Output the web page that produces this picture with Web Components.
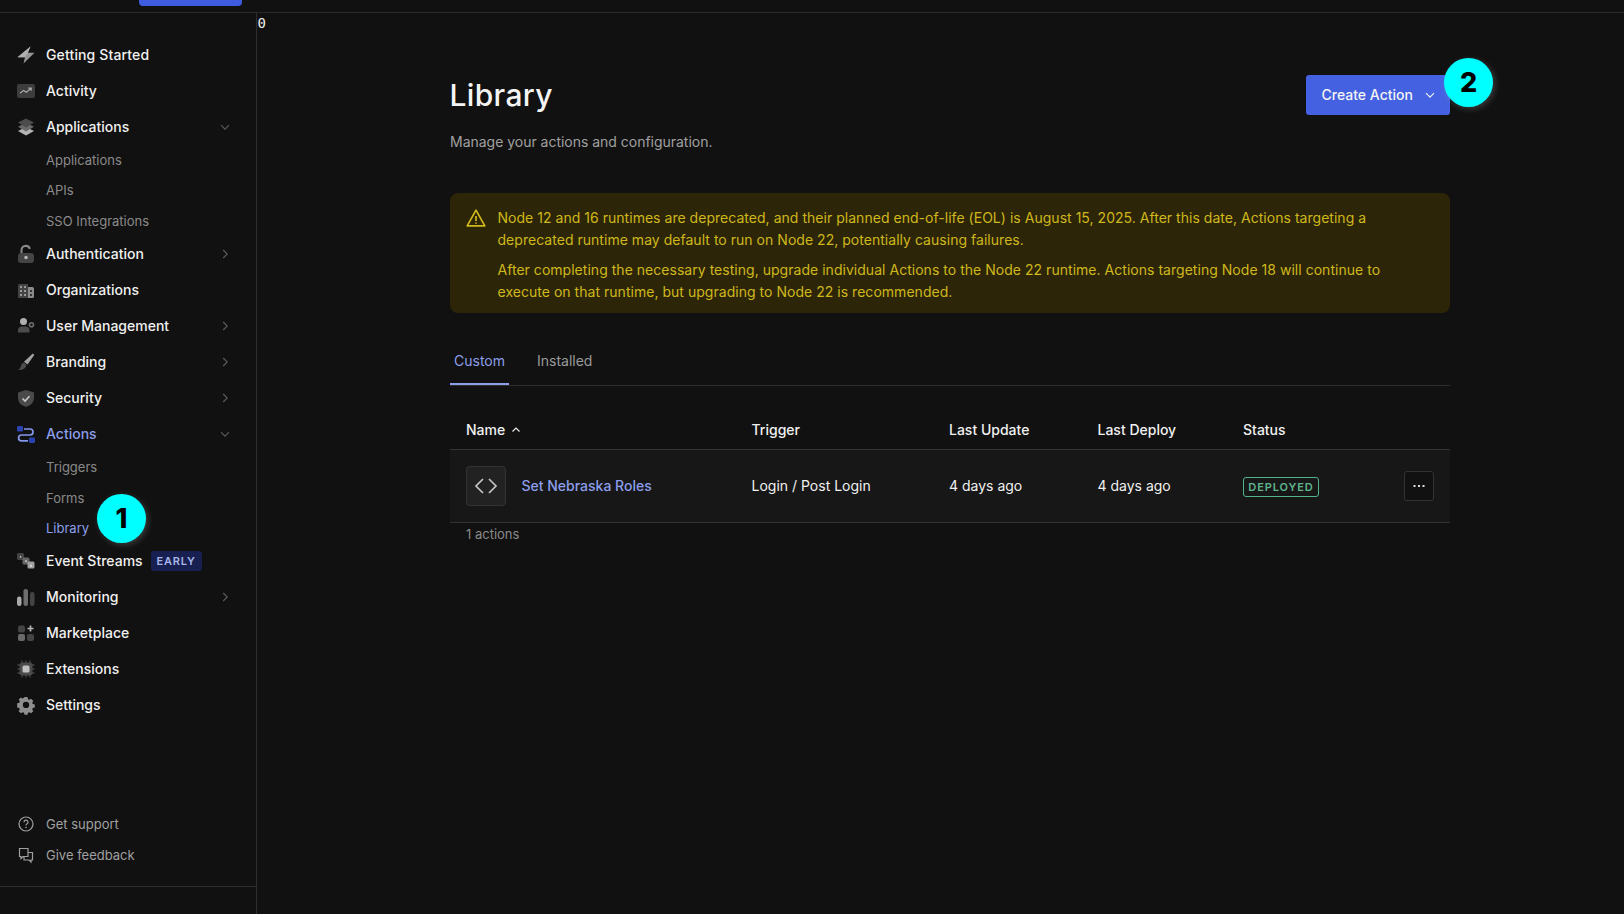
<!DOCTYPE html>
<html lang="en"><head><meta charset="utf-8"><title>Library</title>
<style>
html,body{margin:0;height:914px;overflow:hidden;background:#111;color:#f0f0f0;font-family:Inter,"Liberation Sans",sans-serif;}
app-shell{display:flex;flex-direction:column;height:914px;position:relative}
</style></head><body>
<app-shell>
  <top-bar></top-bar>
  <div style="display:flex;flex:1;min-height:0">
    <side-nav>
      <nav-item icon="bolt" style="letter-spacing:.14px">Getting Started</nav-item>
      <nav-item icon="activity">Activity</nav-item>
      <nav-item icon="stack" chevron="down">Applications</nav-item>
      <nav-sub>Applications</nav-sub>
      <nav-sub>APIs</nav-sub>
      <nav-sub>SSO Integrations</nav-sub>
      <nav-item icon="lock" chevron="right">Authentication</nav-item>
      <nav-item icon="org">Organizations</nav-item>
      <nav-item icon="user" chevron="right">User Management</nav-item>
      <nav-item icon="brush" chevron="right">Branding</nav-item>
      <nav-item icon="shield" chevron="right">Security</nav-item>
      <nav-item icon="actions" chevron="down" active>Actions</nav-item>
      <nav-sub style="height:31px">Triggers</nav-sub>
      <nav-sub style="height:31px">Forms</nav-sub>
      <nav-sub style="height:28.750px" active>Library</nav-sub>
      <nav-item icon="streams" badge="EARLY">Event Streams</nav-item>
      <nav-item icon="bars" chevron="right">Monitoring</nav-item>
      <nav-item icon="market">Marketplace</nav-item>
      <nav-item icon="chip">Extensions</nav-item>
      <nav-item icon="gear">Settings</nav-item>
      <nav-foot slot="foot" icon="help">Get support</nav-foot>
      <nav-foot slot="foot" icon="chat">Give feedback</nav-foot>
    </side-nav>
    <library-page></library-page>
  </div>
  <step-badge style="left:97px;top:494px">1</step-badge>
  <step-badge style="left:1444px;top:58px">2</step-badge>
</app-shell>
<script>
const ICONS={
bolt:'<path d="M14.500 1.500 1.500 12.200H9L7.500 18.500 18.500 7.800H11.800z" fill="#969696"/><path d="M14.500 1.500 1.500 12.200H9L11.800 7.800z" fill="#b0b0b0"/>',
activity:'<rect x="1" y="3" width="18" height="14" rx="2" fill="#3d3d3d"/><path d="M4 12.2 7.600 9.400l2.600 1.800 4.800-3.700M12.300 7.200h2.900v2.600" fill="none" stroke="#aaa" stroke-width="1.200"/>',
stack:'<path d="M10 10 18 14 10 18.500 2 14z" fill="#b5b5b5"/><path d="M10 5.800 18 9.800 10 14.500 2 9.800z" fill="#6a6a6a"/><path d="M10 1.500 18 5.500 10 10.500 2 5.500z" fill="#4c4c4c"/>',
lock:'<path d="M5.500 9V6.200a4.300 4.300 0 0 1 8.400-1.300" fill="none" stroke="#8a8a8a" stroke-width="2"/><rect x="2" y="9" width="16" height="10" rx="3" fill="#444"/><circle cx="10" cy="13.500" r="1.700" fill="#bbb"/>',
org:'<path d="M3.500 4H12v14H2V5.500A1.500 1.500 0 0 1 3.500 4z" fill="#444"/><path d="M12 7h4.500A1.500 1.500 0 0 1 18 8.500V16.500A1.500 1.500 0 0 1 16.500 18H12z" fill="#8a8a8a"/><g fill="#999"><rect x="4" y="6" width="2" height="2"/><rect x="8" y="6" width="2" height="2"/><rect x="4" y="10" width="2" height="2"/><rect x="8" y="10" width="2" height="2"/><rect x="4" y="14" width="2" height="2"/><rect x="8" y="14" width="2" height="2"/></g><g fill="#333"><rect x="14" y="10" width="2" height="2"/><rect x="14" y="14" width="2" height="2"/></g>',
user:'<circle cx="7.500" cy="5.500" r="3.500" fill="#b0b0b0"/><path d="M2 16.500v-2A4 4 0 0 1 6 10.500h3.500a4 4 0 0 1 4 4v2z" fill="#4c4c4c"/><circle cx="15.500" cy="8.800" r="2" fill="none" stroke="#6e6e6e" stroke-width="1.600"/>',
brush:'<path d="M16.800 1.500 18.300 3 11.500 12.500 8 9.800z" fill="#a0a0a0"/><path d="M8 10.500 10.500 13C10 16.500 6 18.500 2 18c2-1 2.500-2.500 3-4.500.4-1.500 1.500-2.700 3-3z" fill="#4c4c4c"/>',
shield:'<path d="M10 2 18 4.500V10c0 4.500-3.500 7.500-8 9-4.500-1.500-8-4.500-8-9V4.500z" fill="#4a4a4a"/><path d="M6.500 10.500 9 13l4.500-4.800" fill="none" stroke="#c8c8c8" stroke-width="1.600"/>',
actions:'<rect x="1" y="2" width="6" height="5.500" rx="1.200" fill="#2b43b0"/><rect x="13" y="13.500" width="6" height="5.500" rx="1.200" fill="#2b43b0"/><path d="M8 5h6a3 3 0 0 1 0 6H5.500a2.900 2.900 0 0 0 0 5.800H12" fill="none" stroke="#8597ea" stroke-width="1.700"/>',
streams:'<rect x="1" y="2" width="7" height="7" rx="1.500" fill="#444"/><rect x="6.500" y="6.500" width="7" height="7" rx="1.500" fill="#666"/><rect x="11.500" y="10.500" width="7" height="7" rx="1.500" fill="#a0a0a0"/><path d="M3.500 6.500 4.600 4.500 5.700 6.500z" fill="#ccc"/><rect x="9" y="9.500" width="2" height="1.200" fill="#ddd"/><path d="M13.800 15.500 15 13.300l1.200 2.200z" fill="#eee"/>',
bars:'<rect x="1" y="9.500" width="4.500" height="9.500" rx="2.200" fill="#aaa"/><rect x="7.500" y="2" width="4.500" height="17" rx="2.200" fill="#6e6e6e"/><rect x="14" y="5" width="4.500" height="14" rx="2.200" fill="#444"/>',
market:'<rect x="2" y="2.500" width="7" height="7" rx="2" fill="#444"/><rect x="2" y="11" width="7" height="7" rx="2" fill="#6a6a6a"/><rect x="11" y="11" width="7" height="7" rx="2" fill="#444"/><path d="M14.500 2.500v6M11.500 5.500h6" stroke="#b5b5b5" stroke-width="1.700" fill="none"/>',
chip:'<path d="M6 1.500v17M10 1.500v17M14 1.500v17M1.500 6h17M1.500 10h17M1.500 14h17" stroke="#444" stroke-width="1.300"/><rect x="3.500" y="3.500" width="13" height="13" rx="3" fill="#4a4a4a"/><rect x="6.500" y="6.500" width="7" height="7" rx="1.500" fill="#c0c0c0"/>',
gear:'<path fill="#8e8e8e" fill-rule="evenodd" d="M8.300 1.800h3.400l.5 2.300 1.500.7 2-1.200 2.400 2.400-1.200 2 .6 1.500 2.300.5v3.400l-2.300.5-.6 1.500 1.200 2-2.400 2.400-2-1.200-1.500.6-.5 2.300H8.300l-.5-2.300-1.500-.6-2 1.200-2.400-2.400 1.200-2-.6-1.500-2.300-.5V8.500l2.300-.5.6-1.500-1.200-2 2.400-2.400 2 1.200 1.500-.7zM10 7a3.500 3.500 0 1 0 0 7 3.500 3.500 0 0 0 0-7z" transform="translate(1 .5) scale(.9)"/>',
help:'<circle cx="10" cy="10" r="7" fill="none" stroke="#a0a0a0" stroke-width="1.200"/><path d="M8 8.200A2 2 0 1 1 10.800 10c-.6.3-.8.700-.8 1.400" fill="none" stroke="#a0a0a0" stroke-width="1.200"/><circle cx="10" cy="13.500" r=".8" fill="#a0a0a0"/>',
chat:'<path d="M3.500 3.500h8.500v8H7l-2 2v-2H3.500z" fill="none" stroke="#a0a0a0" stroke-width="1.200"/><path d="M12 7.500h4.500v7.500H15v2l-2-2H8v-3.500" fill="none" stroke="#a0a0a0" stroke-width="1.200"/>'
};
const CHEV={
 down:'<path d="M2 4.200 6 8.200l4-4" fill="none" stroke="currentColor" stroke-width="1.100"/>',
 right:'<path d="M4.200 2 8.200 6l-4 4" fill="none" stroke="currentColor" stroke-width="1.100"/>'
};
function def(name,html,init){
  customElements.define(name,class extends HTMLElement{
    constructor(){super();this.attachShadow({mode:'open'});}
    connectedCallback(){
      this.shadowRoot.innerHTML=typeof html==='function'?html(this):html;
      if(init)init(this);
    }
  });
}
def('top-bar',`<style>:host{display:block;height:12px;border-bottom:1px solid #2a2a2a;flex:none;padding-left:139px}
div{width:103px;height:6px;background:#3f5be0;border-radius:0 0 4px 4px}</style><div></div>`);
def('side-nav',`<style>:host{display:flex;flex-direction:column;width:256px;flex:none;border-right:1px solid #2e2e2e;box-sizing:content-box;padding-top:24px}
.main{display:flex;flex-direction:column}
.foot{margin-top:auto;display:flex;flex-direction:column;border-bottom:1px solid #2e2e2e;padding-bottom:16px;margin-bottom:27px}</style>
<div class="main"><slot></slot></div><div class="foot"><slot name="foot"></slot></div>`);
def('nav-item',h=>`<style>:host{display:flex;align-items:center;height:36px;padding-left:16px;font:500 14px/20px Inter,sans-serif;color:#f0f0f0}
:host([active]){color:#8c9eea}
svg.i{width:20px;height:20px;margin-right:10px;flex:none}
svg.c{width:12px;height:12px;margin-left:auto;margin-right:25px;color:#5c5c5c;flex:none}
.b{margin-left:8px;background:#172050;color:#a9b5ea;font:600 11px/20px Inter,sans-serif;letter-spacing:.8px;height:20px;padding:0 6px;border-radius:3px}</style>
<svg class="i" viewBox="0 0 20 20">${ICONS[h.getAttribute('icon')]}</svg><slot></slot>
${h.getAttribute('badge')?`<span class="b">${h.getAttribute('badge')}</span>`:''}
${h.getAttribute('chevron')?`<svg class="c" viewBox="0 0 12 12">${CHEV[h.getAttribute('chevron')]}</svg>`:''}`);
def('nav-sub',`<style>:host{display:flex;align-items:center;height:30.250px;padding-left:46px;font:400 13px/20px Inter,sans-serif;color:#8a8a8a}
:host([active]){color:#8c9eea}</style><slot></slot>`);
def('nav-foot',h=>`<style>:host{display:flex;align-items:center;height:31px;padding-left:16px;font:400 13px/20px Inter,sans-serif;color:#a0a0a0}
svg{width:20px;height:20px;margin-right:10px}</style><svg viewBox="0 0 20 20">${ICONS[h.getAttribute('icon')]}</svg><slot></slot>`);
def('step-badge',`<style>:host{position:absolute;display:flex;align-items:center;justify-content:center;width:49px;height:49px;border-radius:50%;background:#00ffff;color:#000;font:800 27px/1 Inter,sans-serif;box-shadow:2px 2px 6px rgba(255,255,255,.18)}</style><slot></slot>`);
def('page-header',`<style>:host{display:flex;justify-content:space-between;align-items:flex-start;height:74px}
h1{margin:0 0 0 -.5px;font:500 30px/40px Inter,sans-serif;font-optical-sizing:none;letter-spacing:.35px;color:#f4f4f4}
p{margin:17px 0 0;font:400 14px/20px Inter,sans-serif;color:#a0a0a0;letter-spacing:-.02px}
button{all:unset;box-sizing:border-box;display:flex;align-items:center;height:40px;width:144px;padding-left:15.500px;background:#4361e0;border-radius:3px;color:#f4f4f4;font:500 14px/20px Inter,sans-serif}
svg{width:12px;height:12px;margin-left:11px}</style>
<div><h1><slot name="title"></slot></h1><p><slot name="sub"></slot></p></div>
<button><slot name="btn"></slot><svg viewBox="0 0 12 12">${CHEV.down}</svg></button>`);
def('alert-box',`<style>:host{display:flex;box-sizing:border-box;height:120px;background:#2d2508;border-radius:8px;padding:14px 24px 14px 16px;color:#cfb81c;font:400 14px/22px Inter,sans-serif;letter-spacing:.03px}
svg{width:22px;height:22px;flex:none;margin:0 10.500px 0 -1px}
.t{display:flex;flex-direction:column;gap:8px}
::slotted(p){margin:0}</style>
<svg viewBox="0 0 22 22"><path d="M11 3.200 19.800 18.800H2.200zM11 9v5M11 15.500v1.300" fill="none" stroke="#cfb81c" stroke-width="1.700" stroke-linejoin="round"/></svg>
<div class="t"><slot></slot></div>`);
def('tab-bar',`<style>:host{display:flex;height:53px;margin-top:19px;border-bottom:1px solid #2e2e2e;font:400 14px/20px Inter,sans-serif;color:#9a9a9a;gap:18px;box-sizing:content-box}</style><slot></slot>`);
def('tab-item',`<style>:host{display:flex;align-items:center;padding:6px 4px 0;height:53px;margin-bottom:-1px;box-sizing:border-box;border-bottom:2px solid transparent}
:host([active]){color:#8c9eea;border-color:#8c9eea}
:host(:not([active])){margin-left:6px}</style><slot></slot>`);
const COLS='grid-template-columns:285.500px 197.500px 148.500px 145.500px 1fr;';
def('table-head',`<style>:host{display:grid;${COLS}height:64px;box-sizing:border-box;align-items:center;padding:24px 16px 0;border-bottom:1px solid #333;font:500 14px/20px Inter,sans-serif;color:#f0f0f0}
svg{width:12px;height:12px;margin-left:5px;vertical-align:-1px}</style>
<div>Name<svg viewBox="0 0 12 12"><path d="M2.500 7.500 6 4l3.500 3.500" fill="none" stroke="currentColor" stroke-width="1.100"/></svg></div><div>Trigger</div><div>Last Update</div><div>Last Deploy</div><div>Status</div>`);
def('action-row',`<style>:host{display:grid;${COLS}height:73px;box-sizing:border-box;align-items:center;padding:0 16px;border-bottom:1px solid #333;background:#171717;font:400 14px/20px Inter,sans-serif;color:#f0f0f0}
.n{display:flex;align-items:center;gap:15.500px;color:#8c9eea;font-weight:500}
.ic{width:40px;height:40px;box-sizing:border-box;background:#222;border:1px solid #333;border-radius:4px;display:flex;align-items:center;justify-content:center}
.ic svg{width:24px;height:24px}
.s{display:flex;align-items:center;justify-content:space-between}
.d{box-sizing:border-box;height:20px;width:76px;border:1px solid #52b38a;border-radius:3px;color:#5eb48e;font:600 11px/18px Inter,sans-serif;letter-spacing:.9px;text-align:center;margin-top:2px}
.m{width:30px;height:30px;box-sizing:border-box;background:#111;border:1px solid #333;border-radius:3px;display:flex;align-items:center;justify-content:center}
.m svg{width:14px;height:14px}</style>
<div class="n"><span class="ic"><svg viewBox="0 0 24 24"><path d="M9 5 2 12l7 7M15 5l7 7-7 7" fill="none" stroke="#c4c4c4" stroke-width="1.700"/></svg></span>Set Nebraska Roles</div>
<div>Login / Post Login</div><div>4 days ago</div><div>4 days ago</div>
<div class="s"><span class="d">DEPLOYED</span><span class="m"><svg viewBox="0 0 14 14"><g fill="#ddd"><rect x="1.500" y="6" width="2" height="2"/><rect x="6" y="6" width="2" height="2"/><rect x="10.500" y="6" width="2" height="2"/></g></svg></span></div>`);
def('library-page',`<style>:host{display:block;flex:1;padding-left:193px;padding-right:174px;position:relative;min-width:0}
.zero{position:absolute;left:.5px;top:1px;font:400 14px/18px "DejaVu Sans Mono",monospace;color:#eee}
.wrap{padding-top:62px}
.count{font:400 13px/20px Inter,sans-serif;color:#8a8a8a;padding:1px 16px}
</style>
<span class="zero">0</span>
<div class="wrap">
<page-header><span slot="title">Library</span><span slot="sub">Manage your actions and configuration.</span><span slot="btn">Create Action</span></page-header>
<alert-box style="margin-top:44px">
<p style="margin:0">Node 12 and 16 runtimes are deprecated, and their planned end-of-life (EOL) is August 15, 2025. After this date, Actions targeting a deprecated runtime may default to run on Node 22, potentially causing failures.</p>
<p style="margin:0">After completing the necessary testing, upgrade individual Actions to the Node 22 runtime. Actions targeting Node 18 will continue to execute on that runtime, but upgrading to Node 22 is recommended.</p>
</alert-box>
<tab-bar><tab-item active>Custom</tab-item><tab-item>Installed</tab-item></tab-bar>
<table-head></table-head>
<action-row></action-row>
<div class="count">1 actions</div>
</div>`);
</script>
</body></html>
